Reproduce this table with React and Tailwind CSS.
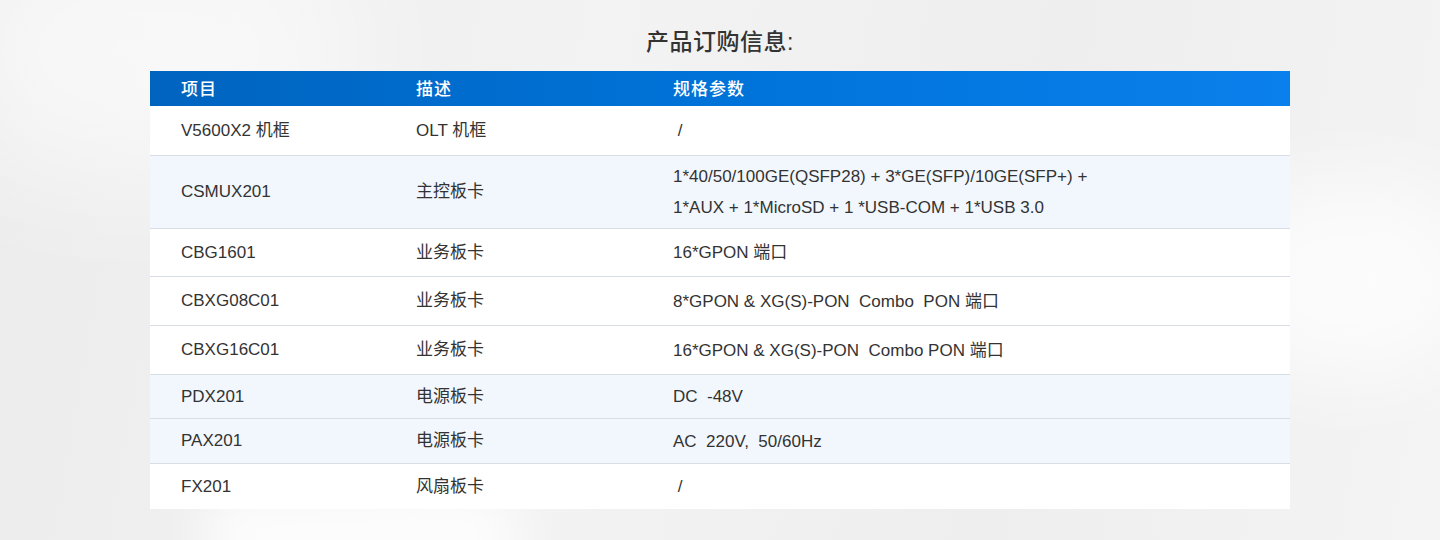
import React from "react";

const rows = [
  { id: "V5600X2 机框", desc: "OLT 机框", spec: [" /"], bg: "bg-white", h: "h-[49px]" },
  {
    id: "CSMUX201",
    desc: "主控板卡",
    spec: ["1*40/50/100GE(QSFP28) + 3*GE(SFP)/10GE(SFP+) +", "1*AUX + 1*MicroSD + 1 *USB-COM + 1*USB 3.0"],
    bg: "bg-[#f2f7fd]",
    h: "h-[73px]",
  },
  { id: "CBG1601", desc: "业务板卡", spec: ["16*GPON 端口"], bg: "bg-white", h: "h-[48px]" },
  { id: "CBXG08C01", desc: "业务板卡", spec: ["8*GPON & XG(S)-PON  Combo  PON 端口"], bg: "bg-white", h: "h-[49px]" },
  { id: "CBXG16C01", desc: "业务板卡", spec: ["16*GPON & XG(S)-PON  Combo PON 端口"], bg: "bg-white", h: "h-[49px]" },
  { id: "PDX201", desc: "电源板卡", spec: ["DC  -48V"], bg: "bg-[#f2f7fd]", h: "h-[44px]" },
  { id: "PAX201", desc: "电源板卡", spec: ["AC  220V,  50/60Hz"], bg: "bg-[#f2f7fd]", h: "h-[45px]" },
  { id: "FX201", desc: "风扇板卡", spec: [" /"], bg: "bg-white", h: "h-[46px]" },
];

const App = () => {
  return (
    <div
      className="relative w-[1440px] h-[540px] overflow-hidden bg-[linear-gradient(100deg,#ececec_0%,#f3f3f3_40%,#eeeeee_70%,#f4f4f4_100%)]"
      style={{ fontFamily: '"Liberation Sans", "Noto Sans CJK SC", sans-serif' }}
    >
      {/* soft background blobs */}
      <div className="absolute left-[-60px] top-[-80px] w-[420px] h-[260px] rounded-full bg-white/60 blur-3xl" />
      <div className="absolute right-[-40px] top-[180px] w-[260px] h-[200px] rounded-full bg-white/70 blur-2xl" />
      <div className="absolute left-[200px] bottom-[-40px] w-[320px] h-[90px] rounded-full bg-white/80 blur-xl" />

      <div className="relative flex flex-col items-center pt-[26px]">
        <h2 className="text-[23px] leading-[32px] font-medium text-[#333333] tracking-[0.5px]">
          产品订购信息:
        </h2>
        <div className="mt-[13px] w-[1140px] bg-white text-[17px] text-[#333333]">
          <div className="flex h-[35px] items-center pt-[3px] text-white font-medium bg-[linear-gradient(90deg,#0064bf_0%,#0073d9_50%,#0a80ec_100%)]">
            <div className="w-[235px] pl-[31px] tracking-[1px]">项目</div>
            <div className="w-[257px] pl-[31px] tracking-[1px]">描述</div>
            <div className="flex-1 pl-[31px] tracking-[1px]">规格参数</div>
          </div>
          {rows.map((r, i) => (
            <div
              key={r.id}
              className={`flex items-center ${r.bg} ${r.h} ${i > 0 ? "border-t border-[#d9dee6]" : ""}`}
            >
              <div className="w-[235px] pl-[31px]">{r.id}</div>
              <div className="w-[257px] pl-[31px]">{r.desc}</div>
              <div className="flex-1 pl-[31px] leading-[31px] whitespace-pre">
                {r.spec.map((s) => (
                  <div key={s}>{s}</div>
                ))}
              </div>
            </div>
          ))}
        </div>
      </div>
    </div>
  );
};

export default App;
